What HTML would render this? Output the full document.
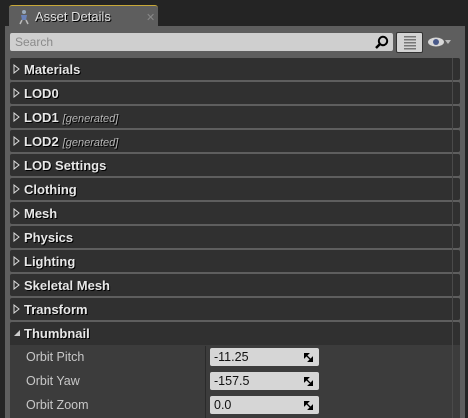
<!DOCTYPE html>
<html><head><style>
*{margin:0;padding:0;box-sizing:border-box}
body{width:468px;height:418px;background:#242424;position:relative;overflow:hidden;font-family:"Liberation Sans",sans-serif}
.panel{position:absolute;left:5px;top:26px;width:460px;height:392px;background:#5e5e5e}
.tab{position:absolute;left:9px;top:5px;width:149px;height:22px;background:#5e5e5e;border-top:1px solid #c8a838;border-radius:3px 3px 0 0}
.tab span{position:absolute;left:26px;top:3px;color:#e0e0e0;font-size:13px;text-shadow:1px 1px 0 #000}
.tab .x{position:absolute;left:137px;top:5px;color:#888;font-size:11px;text-shadow:none}
.search{position:absolute;left:10px;top:33px;width:383px;height:18px;background:#cfcfcf;border-radius:2px}
.search span{position:absolute;left:5px;top:2px;color:#8a8a8a;font-size:12px}
.btn{position:absolute;left:396px;top:32px;width:27px;height:21px;background:#d4d4d4;border:1px solid #333;border-radius:2px}
.row{position:absolute;left:10px;width:450px;height:22px;background:#303030;border-radius:2px}
.row b{position:absolute;left:14px;top:4px;color:#e8e8e8;font-size:13px;text-shadow:1px 1px 0 #000}
.row i{color:#b8b8b8;font-weight:normal;font-size:11px;margin-left:4px}
.row .t{position:absolute;left:3px;top:6px}
.vl{position:absolute;left:452px;top:58px;width:1px;height:360px;background:#4a4a4a}
.prop{position:absolute;left:10px;width:450px;height:24px;background:#3c3c3c}
.prop span{position:absolute;left:16px;top:5px;color:#c8c8c8;font-size:12.5px}
.inp{position:absolute;left:200px;top:3px;width:109px;height:18px;background:#d6d6d6;border-radius:2px}
.inp span{left:4px;top:2px;color:#111}
.inp svg{position:absolute;left:94px;top:5px}
.div{position:absolute;left:205px;top:346px;width:1px;height:72px;background:#2a2a2a}
</style></head><body>
<div class="panel"></div>
<div class="tab">
<svg style="position:absolute;left:7px;top:3px" width="14" height="16"><circle cx="8" cy="3" r="2" fill="#9ab"/><path d="M5 6h6l-1 5h-4z" fill="#6a82b8"/><path d="M6 11l-2 4M10 11l2 4" stroke="#bbb" stroke-width="1.5"/></svg>
<span>Asset Details</span><span class="x">✕</span></div>
<div class="search"><span>Search</span>
<svg style="position:absolute;left:364px;top:2px" width="16" height="15"><circle cx="9" cy="6" r="4.2" fill="none" stroke="#000" stroke-width="2"/><path d="M6 9l-4 4" stroke="#000" stroke-width="2.5"/></svg></div>
<div class="btn"><svg width="25" height="19"><g fill="#777"><rect x="7" y="3" width="12" height="1.5"/><rect x="7" y="6" width="12" height="1.5"/><rect x="7" y="9" width="12" height="1.5"/><rect x="7" y="12" width="12" height="1.5"/><rect x="7" y="15" width="12" height="1.5"/></g></svg></div>
<svg style="position:absolute;left:427px;top:35px" width="30" height="14"><ellipse cx="9" cy="7" rx="8" ry="4.5" fill="#d8d8d8"/><circle cx="9" cy="7" r="3" fill="#4a5a8a"/><path d="M18 5h6l-3 4z" fill="#bbb"/></svg>
<div class="row" style="top:58px"><svg class="t" width="8" height="10"><path d="M1 1l5 4-5 4z" fill="none" stroke="#ddd"/></svg><b>Materials</b></div>
<div class="row" style="top:82px"><svg class="t" width="8" height="10"><path d="M1 1l5 4-5 4z" fill="none" stroke="#ddd"/></svg><b>LOD0</b></div>
<div class="row" style="top:106px"><svg class="t" width="8" height="10"><path d="M1 1l5 4-5 4z" fill="none" stroke="#ddd"/></svg><b>LOD1<i>[generated]</i></b></div>
<div class="row" style="top:130px"><svg class="t" width="8" height="10"><path d="M1 1l5 4-5 4z" fill="none" stroke="#ddd"/></svg><b>LOD2<i>[generated]</i></b></div>
<div class="row" style="top:154px"><svg class="t" width="8" height="10"><path d="M1 1l5 4-5 4z" fill="none" stroke="#ddd"/></svg><b>LOD Settings</b></div>
<div class="row" style="top:178px"><svg class="t" width="8" height="10"><path d="M1 1l5 4-5 4z" fill="none" stroke="#ddd"/></svg><b>Clothing</b></div>
<div class="row" style="top:202px"><svg class="t" width="8" height="10"><path d="M1 1l5 4-5 4z" fill="none" stroke="#ddd"/></svg><b>Mesh</b></div>
<div class="row" style="top:226px"><svg class="t" width="8" height="10"><path d="M1 1l5 4-5 4z" fill="none" stroke="#ddd"/></svg><b>Physics</b></div>
<div class="row" style="top:250px"><svg class="t" width="8" height="10"><path d="M1 1l5 4-5 4z" fill="none" stroke="#ddd"/></svg><b>Lighting</b></div>
<div class="row" style="top:274px"><svg class="t" width="8" height="10"><path d="M1 1l5 4-5 4z" fill="none" stroke="#ddd"/></svg><b>Skeletal Mesh</b></div>
<div class="row" style="top:298px"><svg class="t" width="8" height="10"><path d="M1 1l5 4-5 4z" fill="none" stroke="#ddd"/></svg><b>Transform</b></div>
<div class="row" style="top:322px;border-radius:2px 2px 0 0;height:23px"><svg class="t" width="8" height="10"><path d="M7 2v6h-6z" fill="#ccc"/></svg><b>Thumbnail</b></div>
<div class="prop" style="top:345px"><span>Orbit Pitch</span><div class="inp"><span>-11.25</span><svg width="9" height="9"><path d="M0 0h5l-5 5zM9 9h-5l5-5zM1 1l7 7" fill="#000" stroke="#000" stroke-width="1.3"/></svg></div></div>
<div class="prop" style="top:369px"><span>Orbit Yaw</span><div class="inp"><span>-157.5</span><svg width="9" height="9"><path d="M0 0h5l-5 5zM9 9h-5l5-5zM1 1l7 7" fill="#000" stroke="#000" stroke-width="1.3"/></svg></div></div>
<div class="prop" style="top:393px;height:25px"><span>Orbit Zoom</span><div class="inp"><span>0.0</span><svg width="9" height="9"><path d="M0 0h5l-5 5zM9 9h-5l5-5zM1 1l7 7" fill="#000" stroke="#000" stroke-width="1.3"/></svg></div></div>
<div class="div"></div>
<div class="vl"></div>
</body></html>
